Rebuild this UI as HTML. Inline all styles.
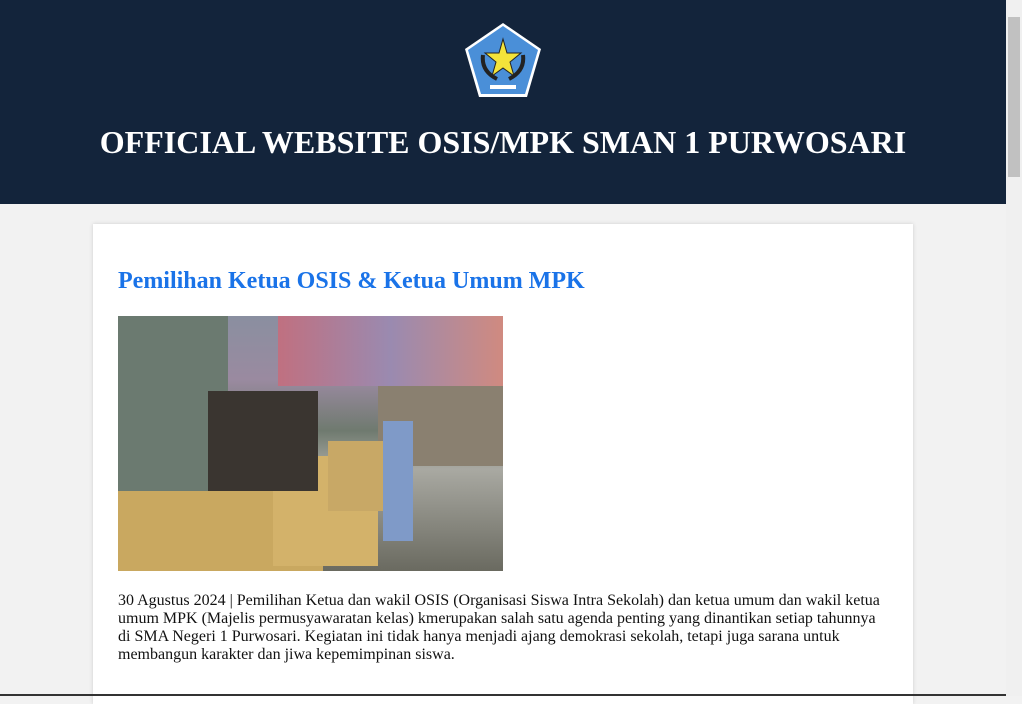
<!DOCTYPE html>
<html><head><style>
body{margin:0;width:1022px;height:696px;overflow:hidden;background:#f2f2f2;font-family:"Liberation Serif",serif;position:relative}
.hdr{position:absolute;left:0;top:0;width:1006px;height:204px;background:#13243b}
.hdr h1{position:absolute;left:0;width:1006px;top:124px;margin:0;text-align:center;color:#fff;font-size:32px;font-weight:bold}
.sb{position:absolute;left:1006px;top:0;width:16px;height:696px;background:#f0f0f0}
.sb div{position:absolute;left:2px;top:17px;width:12px;height:160px;background:#c1c1c1}
.card{position:absolute;left:93px;top:224px;width:820px;height:480px;background:#fff;box-shadow:0 0 4px rgba(0,0,0,.15)}
.card h2{position:absolute;left:25px;top:44px;margin:0;color:#1a73e8;font-size:24px;font-weight:bold}
.img{position:absolute;left:25px;top:92px;width:385px;height:255px;background:linear-gradient(180deg,#8a8fa0 0,#9a8aa0 25%,#6f7a6f 45%,#a9a9a2 60%,#6a6a60 100%);overflow:hidden}
.card p{position:absolute;left:25px;top:368px;width:772px;margin:0;font-size:16px;line-height:18px;color:#111}
.bl{position:absolute;left:0;top:694px;width:1006px;height:2px;background:#333}
</style></head><body>
<div class="hdr">
<svg style="position:absolute;left:463px;top:21px" width="80" height="78" viewBox="0 0 80 78">
<polygon points="40,2 78,28 64,76 16,76 2,28" fill="#fff"/>
<polygon points="40,5 75,29 62,73 18,73 5,29" fill="#4a8fd8"/>
<polygon points="40,18 44,32 58,32 47,41 51,55 40,47 29,55 33,41 22,32 36,32" fill="#f3e33a" stroke="#222"/>
<path d="M20,34 Q18,50 34,58 M60,34 Q62,50 46,58" stroke="#222" stroke-width="4" fill="none"/>
<rect x="27" y="64" width="26" height="4" fill="#fff"/>
</svg>
<h1>OFFICIAL WEBSITE OSIS/MPK SMAN 1 PURWOSARI</h1>
</div>
<div class="sb"><div></div></div>
<div class="card">
<h2>Pemilihan Ketua OSIS &amp; Ketua Umum MPK</h2>
<div class="img">
<div style="position:absolute;left:160px;top:0;width:225px;height:70px;background:linear-gradient(90deg,#c07080,#9a8ab0,#d08a80)"></div>
<div style="position:absolute;left:0;top:0;width:110px;height:200px;background:#6b7a70"></div>
<div style="position:absolute;left:260px;top:70px;width:125px;height:80px;background:#8a8070"></div>
<div style="position:absolute;left:0;top:175px;width:205px;height:80px;background:#c9a860"></div>
<div style="position:absolute;left:155px;top:140px;width:105px;height:110px;background:#d3b26a"></div>
<div style="position:absolute;left:210px;top:125px;width:70px;height:70px;background:#c8a866"></div>
<div style="position:absolute;left:90px;top:75px;width:110px;height:100px;background:#3a3530"></div>
<div style="position:absolute;left:265px;top:105px;width:30px;height:120px;background:#7f9ac8"></div>
</div>
<p>30 Agustus 2024 | Pemilihan Ketua dan wakil OSIS (Organisasi Siswa Intra Sekolah) dan ketua umum dan wakil ketua umum MPK (Majelis permusyawaratan kelas) kmerupakan salah satu agenda penting yang dinantikan setiap tahunnya di SMA Negeri 1 Purwosari. Kegiatan ini tidak hanya menjadi ajang demokrasi sekolah, tetapi juga sarana untuk membangun karakter dan jiwa kepemimpinan siswa.</p>
</div>
<div class="bl"></div>
</body></html>
